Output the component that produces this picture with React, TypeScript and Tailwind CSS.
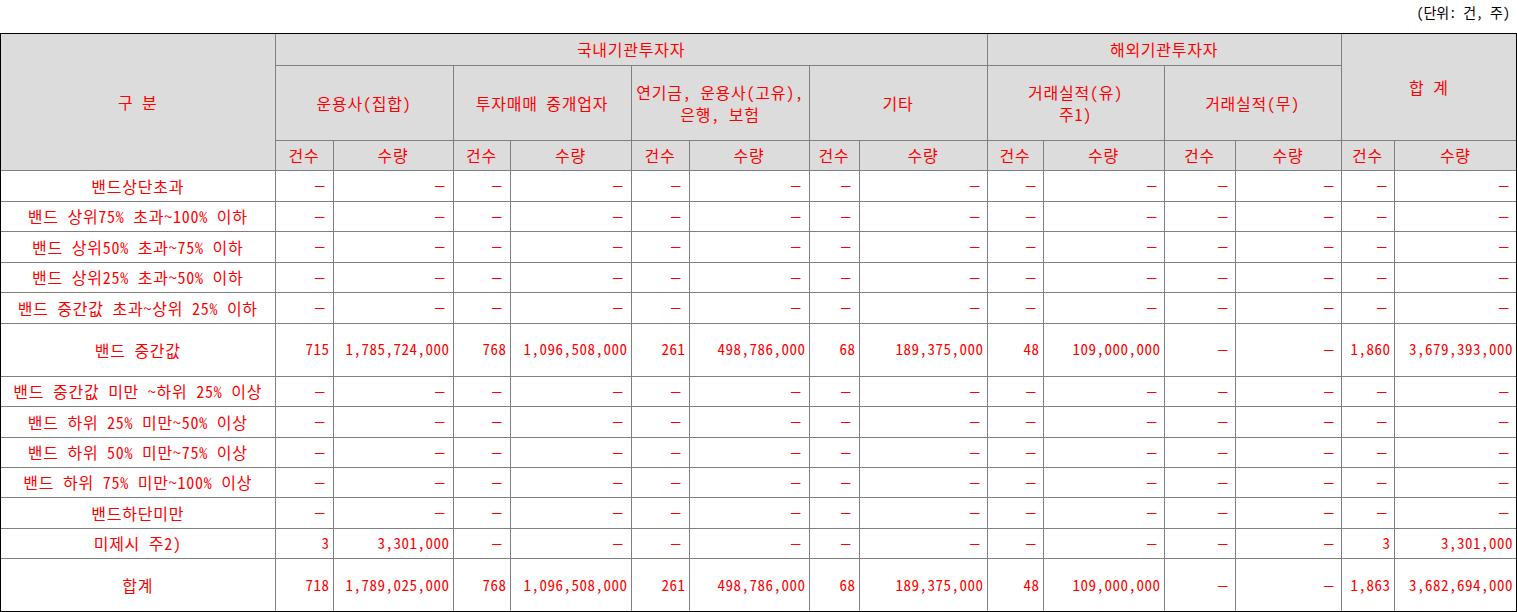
import type { ReactNode } from "react";

const D = "-";

type Row = { label: string; values: string[]; h: number };

const dashes = Array(14).fill(D);

const rows: Row[] = [
  { label: "밴드상단초과", values: dashes, h: 31 },
  { label: "밴드 상위75% 초과~100% 이하", values: dashes, h: 30 },
  { label: "밴드 상위50% 초과~75% 이하", values: dashes, h: 31 },
  { label: "밴드 상위25% 초과~50% 이하", values: dashes, h: 30 },
  { label: "밴드 중간값 초과~상위 25% 이하", values: dashes, h: 31 },
  {
    label: "밴드 중간값",
    values: [
      "715", "1,785,724,000", "768", "1,096,508,000", "261", "498,786,000",
      "68", "189,375,000", "48", "109,000,000", D, D, "1,860", "3,679,393,000",
    ],
    h: 53,
  },
  { label: "밴드 중간값 미만 ~하위 25% 이상", values: dashes, h: 30 },
  { label: "밴드 하위 25% 미만~50% 이상", values: dashes, h: 31 },
  { label: "밴드 하위 50% 미만~75% 이상", values: dashes, h: 30 },
  { label: "밴드 하위 75% 미만~100% 이상", values: dashes, h: 30 },
  { label: "밴드하단미만", values: dashes, h: 31 },
  {
    label: "미제시 주2)",
    values: ["3", "3,301,000", D, D, D, D, D, D, D, D, D, D, "3", "3,301,000"],
    h: 30,
  },
  {
    label: "합계",
    values: [
      "718", "1,789,025,000", "768", "1,096,508,000", "261", "498,786,000",
      "68", "189,375,000", "48", "109,000,000", D, D, "1,863", "3,682,694,000",
    ],
    h: 53,
  },
];

const colWidths = [274, 58, 120, 57, 121, 58, 120, 50, 128, 56, 121, 71, 106, 53, 122];

function Th({
  children,
  colSpan,
  rowSpan,
}: {
  children: ReactNode;
  colSpan?: number;
  rowSpan?: number;
}) {
  return (
    <th
      colSpan={colSpan}
      rowSpan={rowSpan}
      className="border border-[#808080] bg-[#dcdcdc] p-0 text-center align-middle text-[16px] font-normal leading-[22px] tracking-[0.75px] text-[#ff0000]"
    >
      {children}
    </th>
  );
}

// 굴림체처럼 넓은 대시
function Value({ v }: { v: string }) {
  if (v === D) {
    return <span className="inline-block origin-right scale-x-[2.2]">-</span>;
  }
  return <>{v}</>;
}

export default function App() {
  return (
    <div className="w-[1517px] bg-white font-['Noto_Sans_CJK_KR',sans-serif] text-[15px] tracking-[0.5px] [font-feature-settings:'hwid']">
      <div className="h-[33px] pr-[7px] text-right text-[14px] leading-[24px] tracking-normal text-black">
        (단위: 건, 주)
      </div>
      <div className="w-[1517px] border border-black">
        <table className="w-[1515px] table-fixed border-collapse border-hidden">
          <colgroup>
            {colWidths.map((w, i) => (
              <col key={i} style={{ width: w }} />
            ))}
          </colgroup>
          <thead>
            <tr className="h-[31px]">
              <Th rowSpan={3}>구 분</Th>
              <Th colSpan={8}>국내기관투자자</Th>
              <Th colSpan={4}>해외기관투자자</Th>
              <Th colSpan={2} rowSpan={2}>
                합 계
              </Th>
            </tr>
            <tr className="h-[75px]">
              <Th colSpan={2}>운용사(집합)</Th>
              <Th colSpan={2}>투자매매 중개업자</Th>
              <Th colSpan={2}>
                연기금, 운용사(고유),
                <br />
                은행, 보험
              </Th>
              <Th colSpan={2}>기타</Th>
              <Th colSpan={2}>
                거래실적(유)
                <br />
                주1)
              </Th>
              <Th colSpan={2}>거래실적(무)</Th>
            </tr>
            <tr className="h-[30px]">
              {Array.from({ length: 7 }).flatMap((_, i) => [
                <Th key={`c${i}`}>건수</Th>,
                <Th key={`q${i}`}>수량</Th>,
              ])}
            </tr>
          </thead>
          <tbody>
            {rows.map((r) => (
              <tr key={r.label} style={{ height: r.h }}>
                <td className="border border-[#808080] p-0 text-center align-middle text-[16px] tracking-[0.75px] whitespace-nowrap text-[#ff0000]">
                  {r.label}
                </td>
                {r.values.map((v, i) => (
                  <td
                    key={i}
                    className="border border-[#808080] py-0 pr-[3px] pl-0 text-right align-middle whitespace-nowrap text-[#ff0000]"
                  >
                    <Value v={v} />
                  </td>
                ))}
              </tr>
            ))}
          </tbody>
        </table>
      </div>
    </div>
  );
}
